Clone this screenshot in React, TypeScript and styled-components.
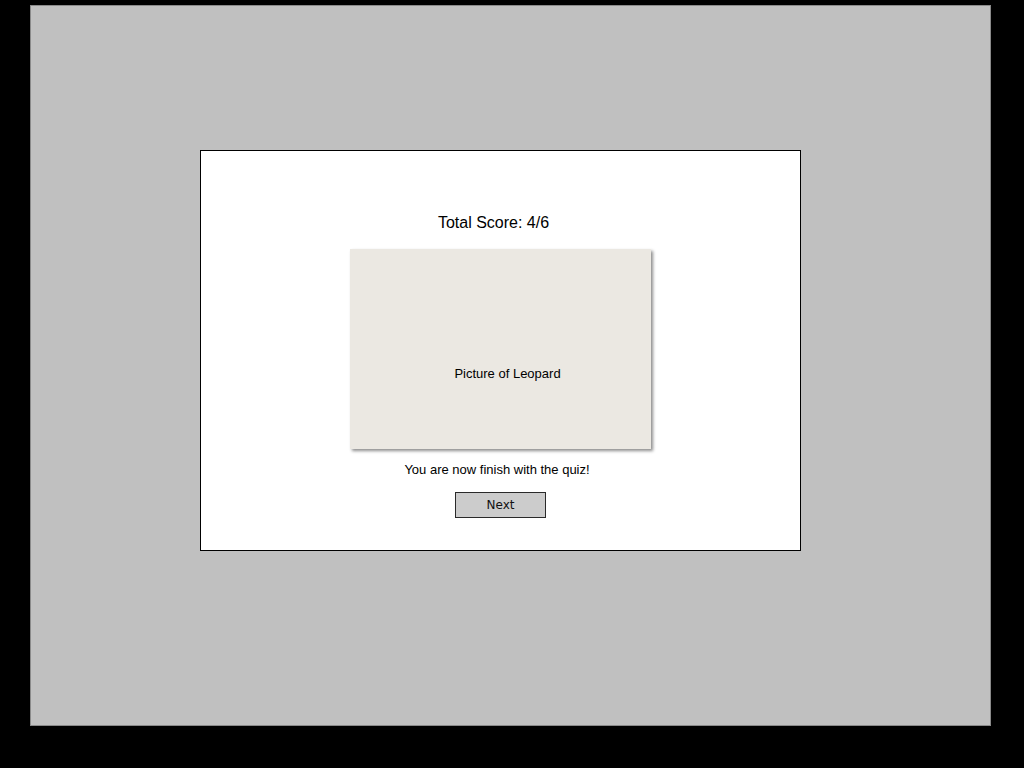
import React from "react";
import styled, { createGlobalStyle } from "styled-components";

const Global = createGlobalStyle`
  html, body { margin: 0; padding: 0; background: #000; }
  body { font-family: "Liberation Sans", Arial, sans-serif; }
`;

const Screen = styled.div`
  width: 1024px;
  height: 768px;
  background: #000;
  padding: 5px 0 0 30px;
  box-sizing: border-box;
`;

const Canvas = styled.div`
  width: 961px;
  height: 721px;
  box-sizing: border-box;
  background: #c0c0c0;
  border: 1px solid #8a8a8a;
  padding: 144px 0 0 169px;
`;

const Dialog = styled.div`
  width: 601px;
  height: 401px;
  box-sizing: border-box;
  background: #fff;
  border: 1px solid #000;
  display: flex;
  flex-direction: column;
  align-items: center;
  padding-top: 62px;
`;

const Title = styled.div<{ $shift?: number }>`
  font-size: 16px;
  line-height: 20px;
  color: #000;
  margin-left: ${(p) => p.$shift ?? 0}px;
`;

const Picture = styled.div`
  margin-top: 16px;
  width: 301px;
  height: 200px;
  background: #ebe8e2;
  box-shadow: 2px 2px 3px rgba(0, 0, 0, 0.45);
  display: flex;
  justify-content: center;
  padding: 117px 0 0 14px;
  box-sizing: border-box;
  font-size: 13px;
  line-height: 16px;
  color: #000;
`;

const Message = styled.div`
  margin-top: 13px;
  margin-left: -7px;
  font-size: 13px;
  line-height: 16px;
  color: #000;
`;

const NextButton = styled.button`
  margin-top: 14px;
  width: 91px;
  height: 26px;
  box-sizing: border-box;
  background: #cccccc;
  border: 1px solid #2a2a2a;
  border-radius: 0;
  font-family: "DejaVu Sans", sans-serif;
  font-size: 12px;
  color: #111;
  padding: 0;
  display: flex;
  align-items: center;
  justify-content: center;
`;

export default function App() {
  return (
    <>
      <Global />
      <Screen>
        <Canvas>
          <Dialog>
            <Title $shift={-14}>Total Score: 4/6</Title>
            <Picture>Picture of Leopard</Picture>
            <Message>You are now finish with the quiz!</Message>
            <NextButton>Next</NextButton>
          </Dialog>
        </Canvas>
      </Screen>
    </>
  );
}
